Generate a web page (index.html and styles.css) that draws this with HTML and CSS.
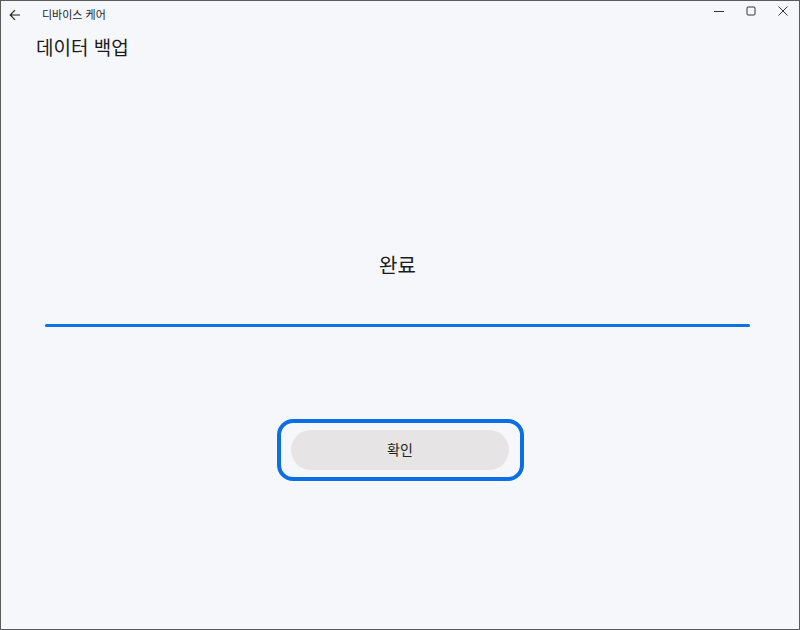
FILE: index.html
```html
<!DOCTYPE html>
<html lang="ko">
<head>
  <meta charset="UTF-8">
  <meta name="viewport" content="width=device-width, initial-scale=1.0">
  <title>디바이스 케어</title>
  <link rel="stylesheet" href="styles.css">
</head>
<body>
  <div class="window">
    <div class="titlebar">
      <div class="back">
        <svg width="12" height="12" viewBox="0 0 12 12">
          <path d="M11 6H1.5M6 1.2L1.2 6 6 10.8" fill="none" stroke="#1a1a1a" stroke-width="1.1"/>
        </svg>
      </div>
      <span class="app-name">디바이스 케어</span>
      <div class="controls">
        <span class="ctl">
          <svg width="10" height="10" viewBox="0 0 10 10"><path d="M0 5.5H10" stroke="#333" stroke-width="1"/></svg>
        </span>
        <span class="ctl">
          <svg width="10" height="10" viewBox="0 0 10 10"><rect x="1" y="1" width="8" height="8" rx="1" fill="none" stroke="#333" stroke-width="1"/></svg>
        </span>
        <span class="ctl">
          <svg width="10" height="10" viewBox="0 0 10 10"><path d="M0.5 0.5L9.5 9.5M9.5 0.5L0.5 9.5" stroke="#333" stroke-width="1"/></svg>
        </span>
      </div>
    </div>

    <h1 class="page-title">데이터 백업</h1>

    <div class="content">
      <p class="status">완료</p>
      <div class="progress"><div class="progress-fill"></div></div>

      <div class="focus-ring">
        <button class="ok-btn">확인</button>
      </div>
    </div>
  </div>
</body>
</html>
```

FILE: styles.css
```css
* {
  box-sizing: border-box;
  margin: 0;
  padding: 0;
  font-family: "Noto Sans CJK KR", "Noto Sans", sans-serif;
}

html, body {
  width: 800px;
  height: 630px;
  overflow: hidden;
}

.window {
  width: 800px;
  height: 630px;
  background: #f6f7fb;
  border: 1px solid #5a5a5a;
  display: flex;
  flex-direction: column;
}

.titlebar {
  height: 27px;
  display: flex;
  align-items: center;
}

.back {
  width: 29px;
  padding-left: 8px;
  display: flex;
  align-items: center;
}

.app-name {
  margin-left: 12px;
  margin-top: -2px;
  font-size: 11px;
  color: #1e1e1e;
}

.controls {
  margin-left: auto;
  display: flex;
  align-self: flex-start;
  padding-top: 4px;
}

.ctl {
  width: 32px;
  height: 12px;
  display: flex;
  align-items: center;
  justify-content: center;
}

.page-title {
  font-size: 19px;
  font-weight: 400;
  color: #1a1a1a;
  margin: 6px 0 0 35px;
  line-height: 26px;
}

.content {
  display: flex;
  flex-direction: column;
  align-items: center;
  padding-top: 190px;
  padding-right: 5px;
}

.status {
  font-size: 20px;
  color: #1a1a1a;
  line-height: 30px;
}

.progress {
  width: 705px;
  height: 3px;
  margin-top: 44px;
  border-radius: 2px;
  background: #d0d8e4;
}

.progress-fill {
  width: 100%;
  height: 100%;
  border-radius: 2px;
  background: #0f70e6;
}

.focus-ring {
  margin-top: 92px;
  margin-left: 5px;
  width: 247px;
  height: 62px;
  border: 4px solid #0a6fe6;
  border-radius: 16px;
  display: flex;
  align-items: center;
  justify-content: center;
}

.ok-btn {
  width: 218px;
  height: 40px;
  border: none;
  border-radius: 20px;
  background: #e6e4e4;
  color: #222;
  font-size: 14px;
  font-family: "Noto Sans CJK KR", sans-serif;
  padding-bottom: 3px;
}
```
